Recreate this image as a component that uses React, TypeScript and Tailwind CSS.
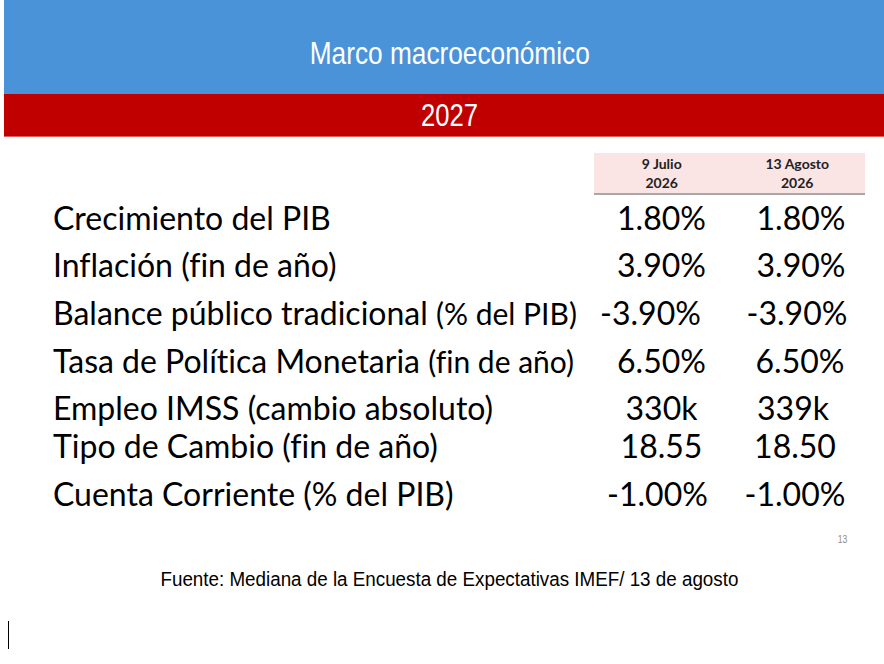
import React from "react";

const lato = { fontFamily: "Lato, 'Open Sans', sans-serif" } as React.CSSProperties;
const arial = { fontFamily: "'Liberation Sans', Arial, sans-serif" } as React.CSSProperties;

type Row = {
  main: string;
  small?: string;
  a: string;
  b: string;
  h: string;
  size: string;
  pa?: string;
  pb?: string;
};

const rows: Row[] = [
  { main: "Crecimiento del PIB", a: "1.80%", b: "1.80%", h: "h-[46px]", size: "text-[32px]", pb: "pl-[8px]" },
  { main: "Inflación (fin de año)", a: "3.90%", b: "3.90%", h: "h-[48px]", size: "text-[32px]", pb: "pl-[8px]" },
  {
    main: "Balance público tradicional ",
    small: "(% del PIB)",
    a: "-3.90%",
    b: "-3.90%",
    h: "h-[48px]",
    size: "text-[32px]",
    pa: "pr-[22px]",
  },
  {
    main: "Tasa de Política Monetaria ",
    small: "(fin de año)",
    a: "6.50%",
    b: "6.50%",
    h: "h-[48px]",
    size: "text-[32px]",
    pb: "pl-[6px]",
  },
  { main: "Empleo IMSS (cambio absoluto)", a: "330k", b: "339k", h: "h-[46px]", size: "text-[32px]", pb: "pr-[8px]" },
  { main: "Tipo de Cambio (fin de año)", a: "18.55", b: "18.50", h: "h-[30px]", size: "text-[32px]", pb: "pr-[4px]" },
  { main: "Cuenta Corriente (% del PIB)", a: "-1.00%", b: "-1.00%", h: "h-[66px]", size: "text-[32px]", pa: "pr-[8px]", pb: "pr-[4px]" },
];

export default function App() {
  return (
    <div className="relative w-[884px] h-[664px] bg-white overflow-hidden [font-variant-ligatures:none]">
      <div className="pl-[4px]">
        <div className="h-[94px] bg-[#4a93d9] flex items-center justify-center pl-[12px]">
          <span className="inline-block text-white text-[32px] leading-none scale-x-[0.82] mt-[12px]" style={arial}>
            Marco macroeconómico
          </span>
        </div>
        <div className="h-[43px] bg-[#c00000] border-b border-[#e06060] flex items-center justify-center pl-[12px]">
          <span className="inline-block text-white text-[32px] leading-none scale-x-[0.8]" style={arial}>
            2027
          </span>
        </div>
      </div>

      <div className="pl-[53px] pr-[19px] pt-[16px] text-black" style={lato}>
        <div className="grid grid-cols-[1fr_135px_136px]">
          <div />
          <div className="col-span-2 grid grid-cols-2 bg-[#fae4e4] border-b-2 border-[#a8a8a8] h-[42px] items-center">
            <div className="text-center text-[14px] font-bold leading-[19px] text-[#222]">
              9 Julio
              <br />
              2026
            </div>
            <div className="text-center text-[14px] font-bold leading-[19px] text-[#222]">
              13 Agosto
              <br />
              2026
            </div>
          </div>
          {rows.map((r) => (
            <React.Fragment key={r.main}>
              <div className={`${r.h} ${r.size} flex items-center whitespace-nowrap leading-none`}>
                <span>
                  {r.main}
                  {r.small && <span className="text-[30px]">{r.small}</span>}
                </span>
              </div>
              <div className={`${r.h} ${r.size} ${r.pa ?? ""} flex items-center justify-center leading-none`}>{r.a}</div>
              <div className={`${r.h} ${r.size} ${r.pb ?? ""} flex items-center justify-center leading-none`}>{r.b}</div>
            </React.Fragment>
          ))}
        </div>
      </div>

      <div className="pr-[36px] flex justify-end">
        <span className="inline-block text-[10px] text-[#8a8a8a] leading-none mt-[8px] scale-x-[0.85]" style={arial}>
          13
        </span>
      </div>

      <div className="flex justify-center mt-[24px] pl-[14px]">
        <span className="inline-block text-[20px] leading-none text-black scale-x-[0.94]" style={arial}>
          Fuente: Mediana de la Encuesta de Expectativas IMEF/ 13 de agosto
        </span>
      </div>

      <div className="ml-[8px] mt-[32px] w-px h-[28px] bg-black" />
    </div>
  );
}
